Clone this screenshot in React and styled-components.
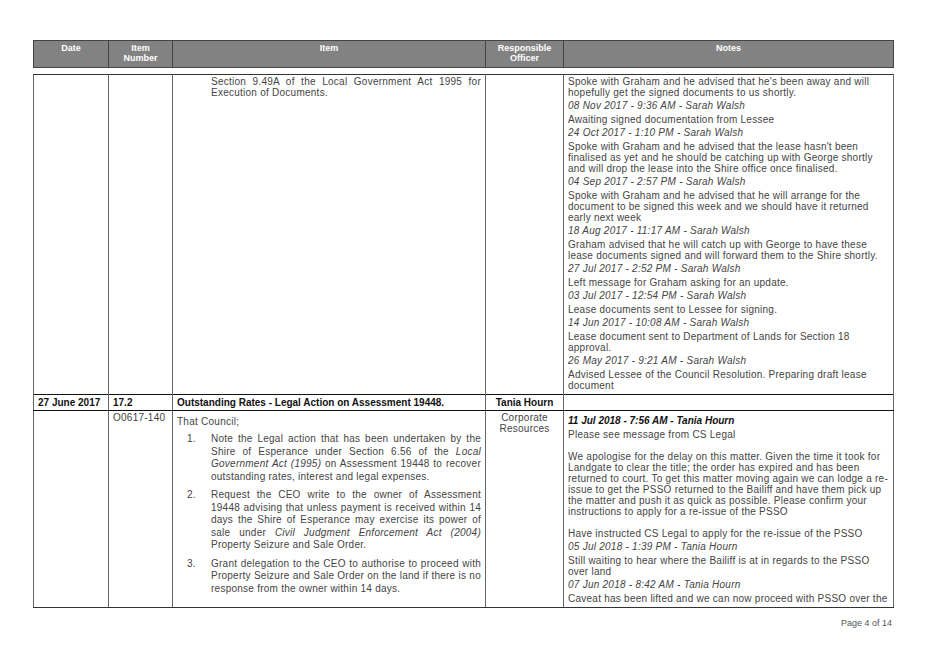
import React from "react";
import styled, { createGlobalStyle } from "styled-components";

const G = createGlobalStyle`
  body{margin:0;background:#fff;font-family:"Liberation Sans",Arial,sans-serif;}
`;
const Page = styled.div`width:928px;height:656px;position:relative;padding:40px 35px 0 33px;box-sizing:border-box;`;
const Table = styled.table`
  width:860px;border-collapse:collapse;table-layout:fixed;font-size:10px;letter-spacing:0.25px;color:#444;line-height:11px;
`;
const Head = styled.th`
  background:#828282;color:#fff;font-weight:bold;font-size:9px;letter-spacing:0;line-height:10px;vertical-align:top;
  border:1.5px solid #444;border-left:1px solid #ccc;padding:2px 2px 4px;height:20px;
  &:first-child{border-left:1.5px solid #444;}
`;
const Gap = styled.tr`height:7px;td{border:none;padding:0;}`;
const Td = styled.td`
  border-left:1px solid #666;border-right:1px solid #666;vertical-align:top;padding:${p=>p.$pad||"1px 4px"};
  text-align:${p=>p.$center?"center":"left"};
`;
const Top = styled.tr`td{border-top:1.5px solid #333;}`;
const Bold = styled.tr`
  td{border-top:1.5px solid #111;border-bottom:1.5px solid #111;font-weight:bold;color:#111;font-size:10px;letter-spacing:0;padding:2px 4px;}
`;
const Last = styled.tr`td{border-bottom:1.5px solid #333;}`;
const Note = styled.div`margin-bottom:2px;`;
const Meta = styled.div`font-style:italic;margin-bottom:3px;`;
const Just = styled.div`text-align:justify;line-height:12.5px;`;
const OL = styled.div`display:flex;margin-top:${p=>p.$mt||3}px;`;
const Num = styled.span`width:24px;flex:none;padding-left:10px;`;
const Footer = styled.div`position:absolute;right:36px;top:618px;font-size:9px;color:#555;`;

const notes1 = [
  ["Spoke with Graham and he advised that he's been away and will hopefully get the signed documents to us shortly.","08 Nov 2017 - 9:36 AM - Sarah  Walsh"],
  ["Awaiting signed documentation from Lessee","24 Oct 2017 - 1:10 PM - Sarah  Walsh"],
  ["Spoke with Graham and he advised that the lease hasn't been finalised as yet and he should be catching up with George shortly and will drop the lease into the Shire office once finalised.","04 Sep 2017 - 2:57 PM - Sarah  Walsh"],
  ["Spoke with Graham and he advised that he will arrange for the document to be signed this week and we should have it returned early next week","18 Aug 2017 - 11:17 AM - Sarah  Walsh"],
  ["Graham advised that he will catch up with George to have these lease documents signed and will forward them to the Shire shortly.","27 Jul 2017 - 2:52 PM - Sarah  Walsh"],
  ["Left message for Graham asking for an update.","03 Jul 2017 - 12:54 PM - Sarah  Walsh"],
  ["Lease documents sent to Lessee for signing.","14 Jun 2017 - 10:08 AM - Sarah  Walsh"],
  ["Lease document sent to Department of Lands for Section 18 approval.","26 May 2017 - 9:21 AM - Sarah  Walsh"],
  ["Advised Lessee of the Council Resolution. Preparing draft lease document",null],
];

export default function App(){
  return <Page><G/>
    <Table>
      <colgroup><col style={{width:75}}/><col style={{width:64}}/><col style={{width:313}}/><col style={{width:78}}/><col style={{width:330}}/></colgroup>
      <thead><tr><Head>Date</Head><Head>Item<br/>Number</Head><Head>Item</Head><Head>Responsible<br/>Officer</Head><Head>Notes</Head></tr></thead>
      <tbody>
        <Gap><td colSpan={5}/></Gap>
        <Top>
          <Td/><Td/>
          <Td $pad="1px 4px 1px 38px"><Just style={{lineHeight:"11px"}}>Section 9.49A of the Local Government Act 1995 for Execution of Documents.</Just></Td>
          <Td/>
          <Td>{notes1.map(([n,m],i)=><div key={i}><Note>{n}</Note>{m&&<Meta>{m}</Meta>}</div>)}</Td>
        </Top>
        <Bold><Td>27 June 2017</Td><Td>17.2</Td><Td>Outstanding Rates - Legal Action on Assessment 19448.</Td><Td $center>Tania Hourn</Td><Td/></Bold>
        <Last>
          <Td/>
          <Td>O0617-140</Td>
          <Td $pad="5px 4px 1px 4px">
            <div>That Council;</div>
            <OL $mt={6}><Num>1.</Num><Just>Note the Legal action that has been undertaken by the Shire of Esperance under Section 6.56 of the <i>Local Government Act (1995)</i> on Assessment 19448 to recover outstanding rates, interest and legal expenses.</Just></OL>
            <OL $mt={6}><Num>2.</Num><Just>Request the CEO write to the owner of Assessment 19448 advising that unless payment is received within 14 days the Shire of Esperance may exercise its power of sale under <i>Civil Judgment Enforcement Act (2004)</i> Property Seizure and Sale Order.</Just></OL>
            <OL $mt={6}><Num>3.</Num><Just>Grant delegation to the CEO to authorise to proceed with Property Seizure and Sale Order on the land if there is no response from the owner within 14 days.</Just></OL>
          </Td>
          <Td $center>Corporate<br/>Resources</Td>
          <Td $pad="4px 4px 1px">
            <Meta style={{fontWeight:"bold",color:"#111",letterSpacing:0}}>11 Jul 2018 - 7:56 AM - Tania Hourn</Meta>
            <Note>Please see message from CS Legal</Note>
            <Note style={{marginTop:11}}>We apologise for the delay on this matter. Given the time it took for Landgate to clear the title; the order has expired and has been returned to court. To get this matter moving again we can lodge a re-issue to get the PSSO returned to the Bailiff and have them pick up the matter and push it as quick as possible. Please confirm your instructions to apply for a re-issue of the PSSO</Note>
            <Note style={{marginTop:11}}>Have instructed CS Legal to  apply for the re-issue of the PSSO</Note>
            <Meta>05 Jul 2018 - 1:39 PM - Tania Hourn</Meta>
            <Note>Still waiting to hear where the Bailiff is at in regards to the PSSO over land</Note>
            <Meta>07 Jun 2018 - 8:42 AM - Tania Hourn</Meta>
            <Note>Caveat has been lifted and we can now proceed with PSSO over the</Note>
          </Td>
        </Last>
      </tbody>
    </Table>
    <Footer>Page 4 of 14</Footer>
  </Page>;
}
